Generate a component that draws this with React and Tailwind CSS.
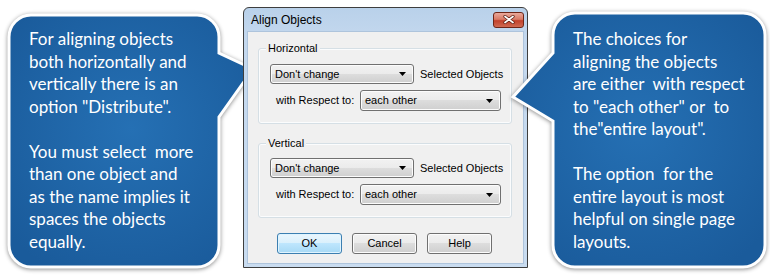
import React from 'react';

const leftLines = [
  'For aligning objects',
  'both horizontally and',
  'vertically there is an',
  'option "Distribute".',
  '',
  'You must select  more',
  'than one object and',
  'as the name implies it',
  'spaces the objects',
  'equally.',
];

const rightLines = [
  'The choices for',
  'aligning the objects',
  'are either  with respect',
  'to "each other" or  to',
  'the"entire layout".',
  '',
  'The option  for the',
  'entire layout is most',
  'helpful on single page',
  'layouts.',
];

function BubbleText({ lines }) {
  return (
    <div className="relative whitespace-pre pl-[23px] font-['Lato',sans-serif] text-[17px] leading-[22.5px] text-white">
      {lines.map((l, i) => (
        <div key={i} className="h-[22.5px]">
          {l}
        </div>
      ))}
    </div>
  );
}

function Combo({ value, className }) {
  return (
    <div
      className={`flex shrink-0 items-center justify-between rounded-[3px] border border-[#707070] bg-[linear-gradient(to_bottom,#f2f2f2_0%,#ebebeb_50%,#dddddd_50%,#cfcfcf_100%)] pl-[4px] pr-[7px] shadow-[inset_0_0_0_1px_#fcfcfc] ${className}`}
    >
      <span>{value}</span>
      <svg width="7" height="4" viewBox="0 0 7 4">
        <path d="M0 0h7L3.5 4z" fill="#000" />
      </svg>
    </div>
  );
}

function Group({ label, className, children }) {
  return (
    <div className={`relative w-[254px] rounded-[3px] border border-[#d5dfe5] shadow-[inset_0_0_0_1px_#fbfcfd] ${className}`}>
      <span className="absolute left-[7px] top-[-8px] bg-[#f0f0f0] px-[2px] leading-[14px]">{label}</span>
      {children}
    </div>
  );
}

function WinButton({ label, primary }) {
  return (
    <button
      className={`flex h-[21px] w-[65px] items-center justify-center rounded-[3px] border ${
        primary
          ? 'border-[#3c7fb1] bg-[linear-gradient(to_bottom,#eaf6fd_0%,#d9f0fc_50%,#bee6fd_50%,#a7d9f5_100%)] shadow-[inset_0_0_0_1px_#dff4ff]'
          : 'border-[#707070] bg-[linear-gradient(to_bottom,#f2f2f2_0%,#ebebeb_50%,#dddddd_50%,#cfcfcf_100%)] shadow-[inset_0_0_0_1px_#fcfcfc]'
      }`}
    >
      {label}
    </button>
  );
}

export default function App() {
  return (
    <div className="flex h-[279px] w-[770px] items-start overflow-hidden bg-white">
      {/* left callout */}
      <div className="relative ml-[6px] mt-[12px] h-[258px] w-[216px] shrink-0">
        <svg
          className="absolute left-0 top-0 overflow-visible drop-shadow-[0_1px_2px_rgba(0,0,0,0.45)]"
          width="260"
          height="258"
          viewBox="0 0 260 258"
        >
          <defs>
            <radialGradient id="lb" cx="50%" cy="45%" r="65%">
              <stop offset="0%" stopColor="#2570b4" />
              <stop offset="100%" stopColor="#1a5b9b" />
            </radialGradient>
          </defs>
          <path
            d="M25 3H191A22 22 0 0 1 213 25V41L247 57L213 105V233A22 22 0 0 1 191 255H25A22 22 0 0 1 3 233V25A22 22 0 0 1 25 3Z"
            fill="url(#lb)"
            stroke="#fff"
            strokeWidth="3"
          />
        </svg>
        <div className="pt-[16px]">
          <BubbleText lines={leftLines} />
        </div>
      </div>

      {/* dialog */}
      <div className="relative ml-[21px] mt-[7px] flex h-[261px] w-[285px] shrink-0 flex-col rounded-t-[6px] border border-[#3e3e3e] bg-[linear-gradient(to_bottom,#b9d1ea_0%,#c4d8ee_12%,#c9dcf0_100%)] font-['Liberation_Sans',Arial,sans-serif] text-[11px] text-black">
        <div className="flex h-[23px] shrink-0 items-center justify-between pl-[7px] pr-[3px]">
          <span className="text-[12px]">Align Objects</span>
          <div className="flex h-[16px] w-[31px] items-center justify-center rounded-[3px] border border-[#6e2517] bg-[linear-gradient(to_bottom,#e9a99b_0%,#d97a66_45%,#c2412b_55%,#cf6a52_100%)]">
            <svg width="12" height="9" viewBox="0 0 12 9">
              <path d="M2 1.5L10 7.5M10 1.5L2 7.5" stroke="#5a1d12" strokeWidth="3.2" strokeLinecap="round" />
              <path d="M2 1.5L10 7.5M10 1.5L2 7.5" stroke="#fff" strokeWidth="1.7" strokeLinecap="round" />
            </svg>
          </div>
        </div>

        <div className="mx-[3px] mb-[3px] flex flex-1 flex-col border border-[#aec4dc] bg-[#f0f0f0] pl-[10px]">
          <Group label="Horizontal" className="mt-[16px] h-[76px] pl-[11px] pt-[15px]">
            <div className="flex items-center">
              <Combo value="Don't change" className="h-[20px] w-[144px]" />
              <span className="ml-[6px]">Selected Objects</span>
            </div>
            <div className="mt-[6px] flex items-center pl-[6px]">
              <span className="w-[84px]">with Respect to:</span>
              <Combo value="each other" className="h-[21px] w-[141px]" />
            </div>
          </Group>

          <Group label="Vertical" className="mt-[19px] h-[75px] pl-[11px] pt-[14px]">
            <div className="flex items-center">
              <Combo value="Don't change" className="h-[20px] w-[144px]" />
              <span className="ml-[6px]">Selected Objects</span>
            </div>
            <div className="mt-[6px] flex items-center pl-[6px]">
              <span className="w-[84px]">with Respect to:</span>
              <Combo value="each other" className="h-[21px] w-[141px]" />
            </div>
          </Group>

          <div className="mt-[15px] flex gap-[10px] pl-[19px]">
            <WinButton label="OK" primary />
            <WinButton label="Cancel" />
            <WinButton label="Help" />
          </div>
        </div>
      </div>

      {/* right callout */}
      <div className="relative ml-[22px] mt-[10px] h-[260px] w-[218px] shrink-0">
        <svg
          className="absolute left-[-40px] top-0 overflow-visible drop-shadow-[0_1px_2px_rgba(0,0,0,0.45)]"
          width="260"
          height="260"
          viewBox="-40 0 260 260"
        >
          <defs>
            <radialGradient id="rb" cx="50%" cy="45%" r="65%">
              <stop offset="0%" stopColor="#2570b4" />
              <stop offset="100%" stopColor="#1a5b9b" />
            </radialGradient>
          </defs>
          <path
            d="M25 3H193A22 22 0 0 1 215 25V235A22 22 0 0 1 193 257H25A22 22 0 0 1 3 235V111L-37 87L3 43V25A22 22 0 0 1 25 3Z"
            fill="url(#rb)"
            stroke="#fff"
            strokeWidth="3"
          />
        </svg>
        <div className="pt-[18px]">
          <BubbleText lines={rightLines} />
        </div>
      </div>
    </div>
  );
}
